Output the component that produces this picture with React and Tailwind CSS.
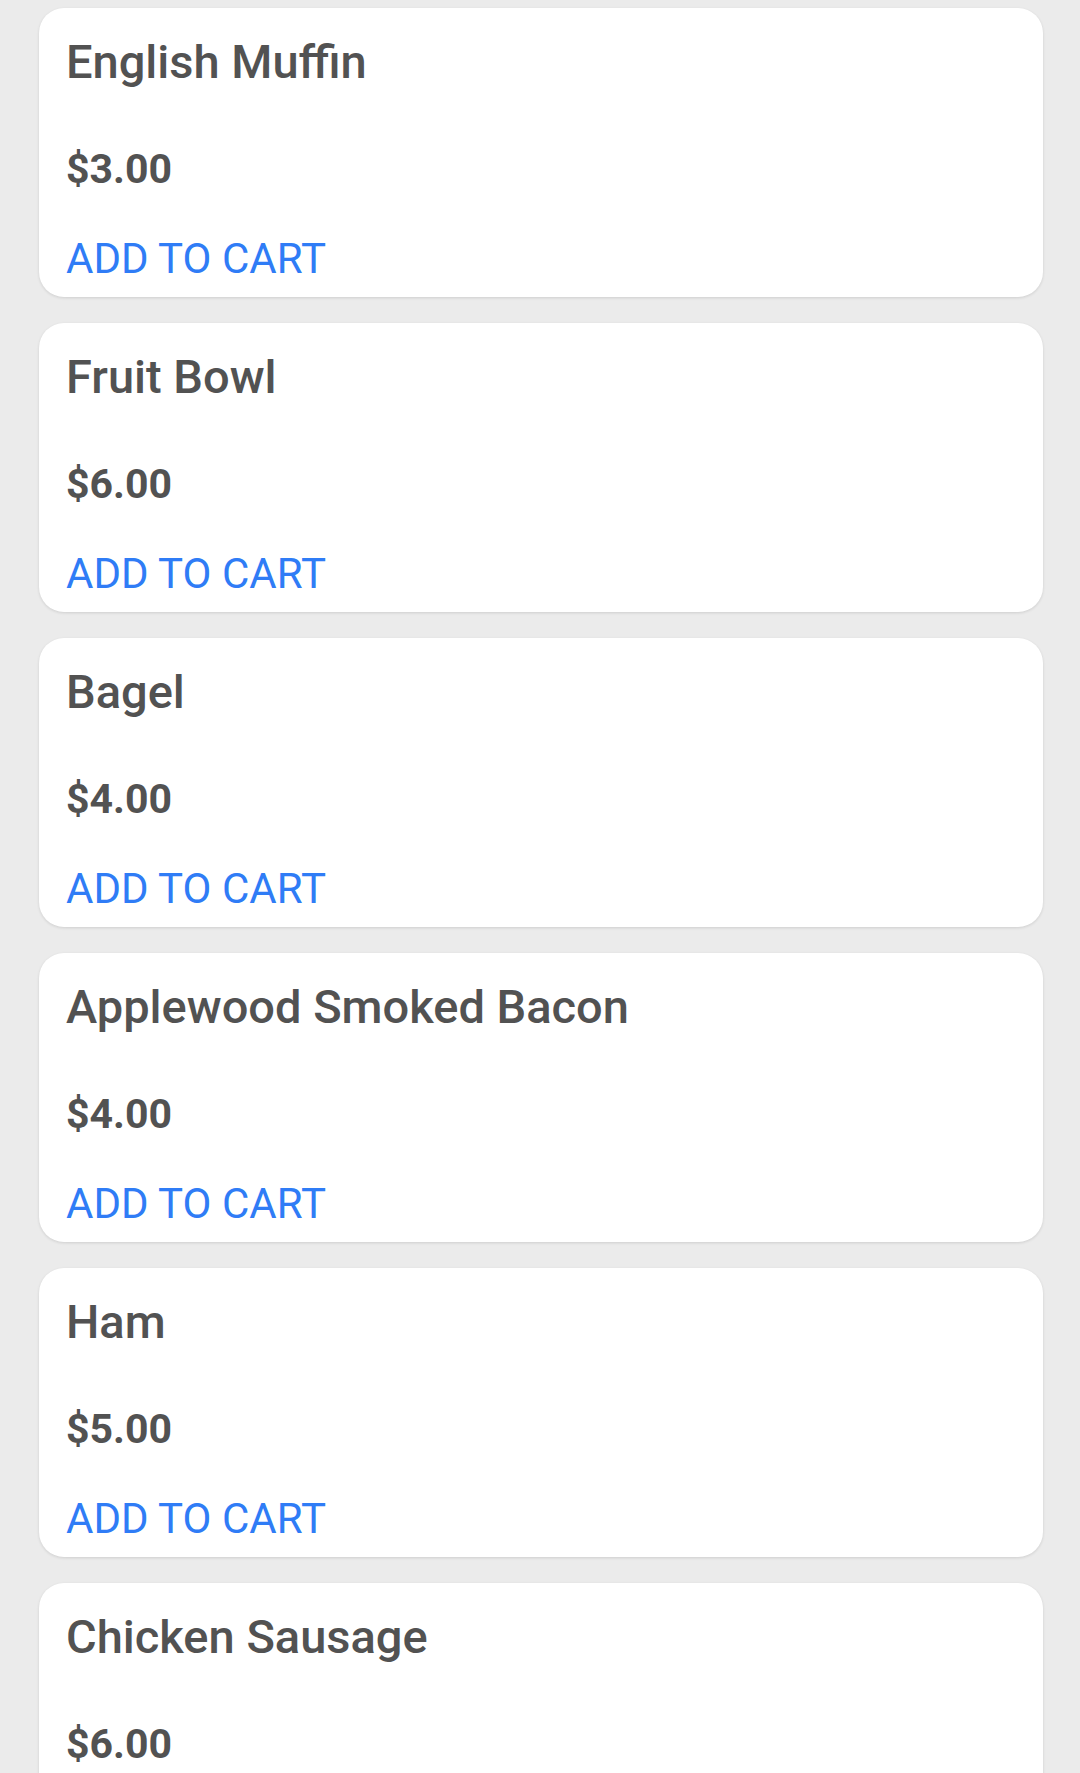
export default function App() {
  const items = [
    ["English Muffin", "$3.00"],
    ["Fruit Bowl", "$6.00"],
    ["Bagel", "$4.00"],
    ["Applewood Smoked Bacon", "$4.00"],
    ["Ham", "$5.00"],
    ["Chicken Sausage", "$6.00"],
  ];
  return (
    <div className="h-[1773px] bg-[#ebebeb] pt-[8px] pl-[39px] pr-[37px] flex flex-col gap-[26px] overflow-hidden" style={{ fontFamily: "Roboto, 'Liberation Sans', sans-serif" }}>
      {items.map(([name, price]) => (
        <div key={name} className="bg-white rounded-[25px] h-[289px] shrink-0 shadow-[0_1px_3px_rgba(0,0,0,0.12)] pl-[27px] pt-[24px] flex flex-col">
          <div className="text-[47px] leading-[59px] font-medium text-[#525252]">{name}</div>
          <div className="mt-[52px] text-[41px] leading-[52px] font-bold text-[#525252]">{price}</div>
          <div className="mt-[40px] text-[42px] leading-[48px] text-[#2f7cf6]">ADD TO CART</div>
        </div>
      ))}
    </div>
  );
}
